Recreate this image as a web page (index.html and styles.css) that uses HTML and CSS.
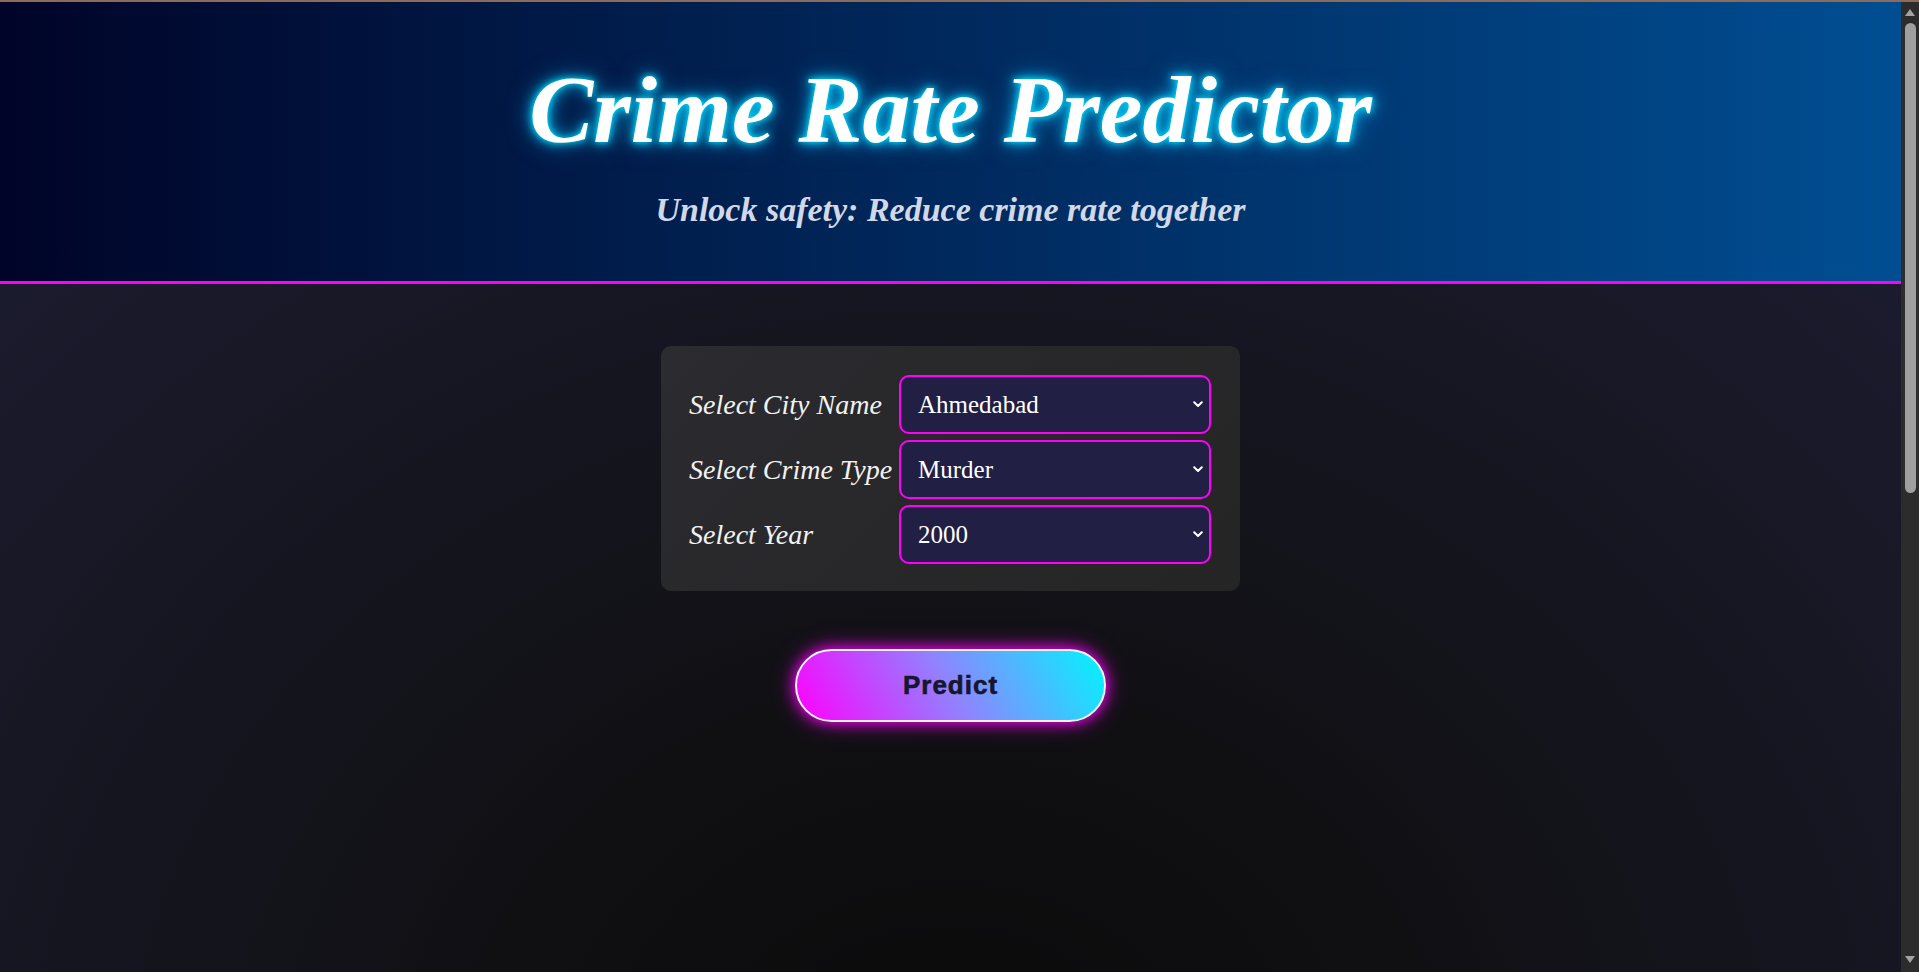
FILE: index.html
```html
<!DOCTYPE html>
<html lang="en">
<head>
<meta charset="utf-8">
<title>Crime Rate Predictor</title>
<link rel="stylesheet" href="styles.css">
</head>
<body>
<div class="page">
  <header class="hero">
    <h1 class="hero-title">Crime Rate Predictor</h1>
    <p class="hero-tagline">Unlock safety: Reduce crime rate together</p>
  </header>
  <main class="content">
    <form class="card">
      <label class="field-label" for="city">Select City Name</label>
      <div class="select-wrap">
        <select id="city" class="field-select">
          <option>Ahmedabad</option>
          <option>Bengaluru</option>
          <option>Chennai</option>
          <option>Delhi</option>
          <option>Mumbai</option>
        </select>
        <svg class="chevron" width="10" height="7" viewBox="0 0 10 7"><path d="M1.2 1.2 L5 5 L8.8 1.2" fill="none" stroke="#ffffff" stroke-width="2" stroke-linecap="round" stroke-linejoin="round"/></svg>
      </div>

      <label class="field-label" for="crime">Select Crime Type</label>
      <div class="select-wrap">
        <select id="crime" class="field-select">
          <option>Murder</option>
          <option>Kidnapping</option>
          <option>Theft</option>
        </select>
        <svg class="chevron" width="10" height="7" viewBox="0 0 10 7"><path d="M1.2 1.2 L5 5 L8.8 1.2" fill="none" stroke="#ffffff" stroke-width="2" stroke-linecap="round" stroke-linejoin="round"/></svg>
      </div>

      <label class="field-label" for="year">Select Year</label>
      <div class="select-wrap">
        <select id="year" class="field-select">
          <option>2000</option>
          <option>2001</option>
          <option>2002</option>
        </select>
        <svg class="chevron" width="10" height="7" viewBox="0 0 10 7"><path d="M1.2 1.2 L5 5 L8.8 1.2" fill="none" stroke="#ffffff" stroke-width="2" stroke-linecap="round" stroke-linejoin="round"/></svg>
      </div>
    </form>
    <button class="predict" type="button">Predict</button>
  </main>
</div>
<div class="scroll-rail" aria-hidden="true">
  <span class="rail-arrow rail-arrow-up"></span>
  <span class="rail-thumb"></span>
  <span class="rail-arrow rail-arrow-down"></span>
</div>
</body>
</html>
```

FILE: styles.css
```css
html {
  background: #0e0e10;
}

body {
  margin: 0;
  height: 100vh;
  box-sizing: border-box;
  overflow: hidden;
  border-top: 2px solid #8d6b5a;
  display: flex;
  font-family: "Liberation Serif", "Times New Roman", serif;
  color: #ffffff;
}

.page {
  flex: 1;
  min-width: 0;
  overflow: hidden;
}

/* window scrollbar rail */
.scroll-rail {
  width: 18px;
  flex: none;
  background: #2c2c2c;
  display: flex;
  flex-direction: column;
  align-items: center;
  padding: 7px 0 9px;
  box-sizing: border-box;
}

.rail-arrow {
  width: 0;
  height: 0;
  border-left: 5px solid transparent;
  border-right: 5px solid transparent;
}

.rail-arrow-up {
  border-bottom: 7px solid #a3a3a3;
}

.rail-arrow-down {
  margin-top: auto;
  border-top: 7px solid #a3a3a3;
}

.rail-thumb {
  margin-top: 7px;
  align-self: flex-start;
  margin-left: 4px;
  width: 11px;
  height: 470px;
  border-radius: 6px;
  background: #9f9f9f;
}

.hero {
  background: linear-gradient(to right, #000428, #004e92);
  border-bottom: 3px solid #ff00ff;
  padding: 60px 0 54px;
  text-align: center;
}

.hero-title {
  margin: 0;
  font-size: 96px;
  line-height: 96px;
  font-weight: 700;
  font-style: italic;
  color: #ffffff;
  text-shadow: 0 0 6px #00e5ff, 0 0 14px #00c8ff, 0 0 26px rgba(0, 190, 255, 0.55);
}

.hero-tagline {
  margin: 35px 0 0;
  font-size: 34px;
  line-height: 34px;
  font-weight: 700;
  font-style: italic;
  color: #d3d8e8;
}

.content {
  min-height: 1646px;
  background: radial-gradient(ellipse at center, #0a0a0a 0%, #101013 35%, #1b1b2e 100%);
  display: flex;
  flex-direction: column;
  align-items: center;
  padding-top: 62px;
  box-sizing: border-box;
}

.card {
  width: 579px;
  box-sizing: border-box;
  padding: 29px 29px 27px 28px;
  border-radius: 10px;
  background: linear-gradient(135deg, #2b2b30, #252525);
  display: grid;
  grid-template-columns: 210px 312px;
  row-gap: 6px;
  align-items: center;
}

.field-label {
  font-size: 28px;
  font-style: italic;
  color: #f2f2f2;
  white-space: nowrap;
}

.select-wrap {
  position: relative;
  height: 59px;
}

.field-select {
  appearance: none;
  -webkit-appearance: none;
  width: 100%;
  height: 100%;
  box-sizing: border-box;
  margin: 0;
  padding: 0 30px 0 17px;
  border: 2px solid #ff00ff;
  border-radius: 10px;
  background: #221f45;
  color: #ffffff;
  font-family: "Liberation Serif", "Times New Roman", serif;
  font-size: 25px;
  outline: none;
}

.chevron {
  position: absolute;
  right: 8px;
  top: 26px;
  pointer-events: none;
}

.predict {
  margin-top: 58px;
  width: 311px;
  height: 73px;
  border: 2px solid #f4f4f4;
  border-radius: 37px;
  background: linear-gradient(60deg, #ff00ff 0%, #8f84ff 50%, #00f5ff 100%);
  box-shadow: 0 0 14px #ff00ff, 0 0 26px rgba(255, 0, 255, 0.45);
  color: #16162e;
  font-family: "Liberation Sans", Arial, sans-serif;
  font-size: 26px;
  font-weight: 700;
  letter-spacing: 1px;
  -webkit-text-stroke: 0.6px #16162e;
  cursor: pointer;
}
```
